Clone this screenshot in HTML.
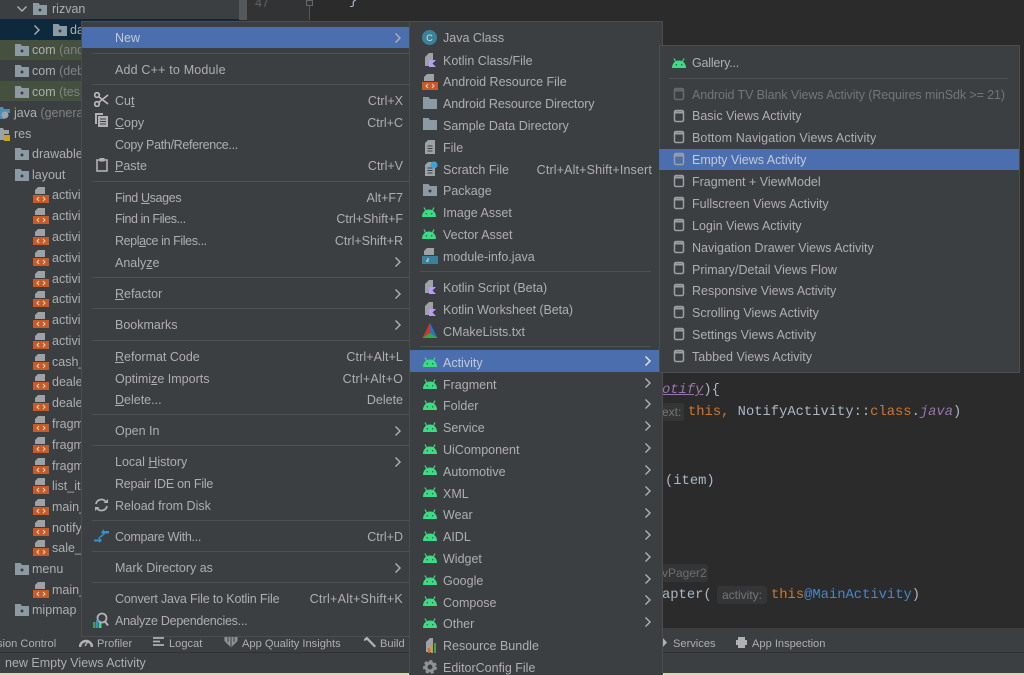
<!DOCTYPE html>
<html><head><meta charset="utf-8"><title>New Empty Views Activity</title>
<style>
html,body{margin:0;padding:0;background:#2b2b2b}
#p{position:relative;width:1024px;height:675px;overflow:hidden;background:#2b2b2b;font-family:"Liberation Sans",sans-serif;font-size:12.5px;color:#adafb1;filter:blur(.3px)}
#p div,#p svg{position:absolute}
.t{height:16px;line-height:16px;white-space:nowrap}
.s{height:16px;line-height:16px;white-space:nowrap;text-align:right}
.b{height:16px;line-height:16px;white-space:nowrap;font-size:11.1px}
.l{height:1px;background:#4f5254}
.m{background:#3c3f41;border:1px solid #4b4e50;box-sizing:border-box}
.h{background:#4b6eaf}
.c{font-family:"Liberation Mono",monospace;font-size:13.8px;color:#a9b7c6;height:18px;line-height:18px;white-space:pre}
.g{color:#777;font-size:12px;font-family:"Liberation Sans",sans-serif;background:#333536;border-radius:3px;height:18px;line-height:18px;padding:0 3px}
u{text-underline-offset:1px}
.o{color:#cc7832}
.d{color:#808284}
</style></head><body><div id="p">
<svg width="0" height="0" style="left:0;top:0"><defs>
<symbol id="a" viewBox="0 0 14 12"><path d="M0 12C0 7.500 3 4.500 7 4.500S14 7.500 14 12Z" fill="#3ddc84"/><path d="M3.500 5.500 2 2.500M10.500 5.500 12 2.500" stroke="#3ddc84" stroke-width="1.200"/><circle cx="4.300" cy="8.800" r=".7" fill="#3c3f41"/><circle cx="9.700" cy="8.800" r=".7" fill="#3c3f41"/></symbol>
<symbol id="f" viewBox="0 0 16 14"><path d="M1 1H6.500L8 3H15V13H1Z" fill="#8c9aa3"/><circle cx="8" cy="8" r="1.500" fill="#3c3f41"/></symbol>
<symbol id="e" viewBox="0 0 16 14"><path d="M1 1H6.500L8 3H15V13H1Z" fill="#8c9aa3"/></symbol>
<symbol id="x" viewBox="0 0 16 16"><path d="M5 0H12V7H2V3Z" fill="#9da2a6"/><path d="M0 8H16V16H0Z" fill="#c75a26"/><path d="M6 10 4 12 6 14M10 10 12 12 10 14" stroke="#e8d8c8" stroke-width="1" fill="none"/></symbol>
<symbol id="k" viewBox="0 0 14 16"><path d="M2 5 6 1H10V8H7V14H2Z" fill="#9da2a6"/><path d="M6 8H13L9.500 11.500 13 15H6Z" fill="#b99bf8"/></symbol>
<symbol id="w" viewBox="0 0 12 14"><rect x="1.500" y="1.500" width="9" height="11" rx="1.500" fill="none" stroke="#9aa0a5" stroke-width="1.500"/><path d="M1.500 3.500H10.500" stroke="#9aa0a5" stroke-width="2"/></symbol>
<symbol id="r" viewBox="0 0 8 12"><path d="M1.500 1.500 6 6 1.500 10.500" fill="none" stroke="#afb1b3" stroke-width="1.400"/></symbol>
<symbol id="d" viewBox="0 0 12 16"><path d="M4 1H11V15H1V4Z" fill="#9da2a6"/><path d="M3.500 7H8.500M3.500 9.500H8.500M3.500 12H8.500" stroke="#3c3f41"/></symbol>
</defs></svg>

<!-- project tree -->
<div style="left:0;top:0;width:240px;height:629px;background:#3c3f41"></div>
<div style="left:0;top:19px;width:240px;height:21px;background:#0d293e"></div>
<div style="left:0;top:40px;width:240px;height:20px;background:#45503f"></div>
<div style="left:0;top:81px;width:240px;height:20px;background:#45503f"></div>
<div style="left:239px;top:0;width:8px;height:20px;background:#55585a"></div>
<div style="left:247px;top:0;width:62px;height:21px;background:#313335"></div>
<svg style="left:16px;top:5px" width="12" height="8"><path d="M1.500 1.500 6 6 10.500 1.500" fill="none" stroke="#afb1b3" stroke-width="1.400"/></svg>
<svg style="left:33px;top:24px" width="8" height="12"><use href="#r"/></svg>
<svg style="left:32px;top:2px" width="16" height="14"><use href="#f"/></svg>
<svg style="left:52px;top:23px" width="16" height="14"><use href="#f"/></svg>
<div class="t" style="left:52px;top:1px">rizvan</div>
<div class="t" style="left:70px;top:22px">da</div>
<svg style="left:14px;top:43px" width="16" height="14"><use href="#f"/></svg>
<svg style="left:14px;top:64px" width="16" height="14"><use href="#f"/></svg>
<svg style="left:14px;top:85px" width="16" height="14"><use href="#f"/></svg>
<div class="t" style="left:32px;top:42px">com <span class="d">(and</span></div>
<div class="t" style="left:32px;top:63px">com <span class="d">(deb</span></div>
<div class="t" style="left:32px;top:84px">com <span class="d">(tes</span></div>
<svg style="left:-2px;top:106px" width="14" height="14"><path d="M0 1H5L6 3H12V7H7V13H0Z" fill="#4b8fb5"/><circle cx="7" cy="9" r="3.500" fill="#a0a4a8"/></svg>
<div class="t" style="left:14px;top:105px">java <span class="d">(genera</span></div>
<svg style="left:-1px;top:127px" width="13" height="15"><path d="M0 1H4L5 3H10V7H5V13H0Z" fill="#9ca3a8"/><path d="M5 8H11V14H5Z" fill="#c9a02f"/></svg>
<div class="t" style="left:14px;top:126px">res</div>
<svg style="left:14px;top:147px" width="16" height="14"><use href="#f"/></svg>
<div class="t" style="left:32px;top:146px">drawable</div>
<svg style="left:14px;top:168px" width="16" height="14"><use href="#f"/></svg>
<div class="t" style="left:32px;top:167px">layout</div>
<svg style="left:33px;top:187px" width="16" height="16"><use href="#x"/></svg><div class="t" style="left:52px;top:187px">activi</div>
<svg style="left:33px;top:208px" width="16" height="16"><use href="#x"/></svg><div class="t" style="left:52px;top:208px">activi</div>
<svg style="left:33px;top:229px" width="16" height="16"><use href="#x"/></svg><div class="t" style="left:52px;top:229px">activi</div>
<svg style="left:33px;top:250px" width="16" height="16"><use href="#x"/></svg><div class="t" style="left:52px;top:250px">activi</div>
<svg style="left:33px;top:271px" width="16" height="16"><use href="#x"/></svg><div class="t" style="left:52px;top:271px">activi</div>
<svg style="left:33px;top:291px" width="16" height="16"><use href="#x"/></svg><div class="t" style="left:52px;top:291px">activi</div>
<svg style="left:33px;top:312px" width="16" height="16"><use href="#x"/></svg><div class="t" style="left:52px;top:312px">activi</div>
<svg style="left:33px;top:333px" width="16" height="16"><use href="#x"/></svg><div class="t" style="left:52px;top:333px">activi</div>
<svg style="left:33px;top:354px" width="16" height="16"><use href="#x"/></svg><div class="t" style="left:52px;top:354px">cash_</div>
<svg style="left:33px;top:374px" width="16" height="16"><use href="#x"/></svg><div class="t" style="left:52px;top:374px">deale</div>
<svg style="left:33px;top:395px" width="16" height="16"><use href="#x"/></svg><div class="t" style="left:52px;top:395px">deale</div>
<svg style="left:33px;top:416px" width="16" height="16"><use href="#x"/></svg><div class="t" style="left:52px;top:416px">fragm</div>
<svg style="left:33px;top:437px" width="16" height="16"><use href="#x"/></svg><div class="t" style="left:52px;top:437px">fragm</div>
<svg style="left:33px;top:458px" width="16" height="16"><use href="#x"/></svg><div class="t" style="left:52px;top:458px">fragm</div>
<svg style="left:33px;top:478px" width="16" height="16"><use href="#x"/></svg><div class="t" style="left:52px;top:478px">list_it</div>
<svg style="left:33px;top:499px" width="16" height="16"><use href="#x"/></svg><div class="t" style="left:52px;top:499px">main_</div>
<svg style="left:33px;top:520px" width="16" height="16"><use href="#x"/></svg><div class="t" style="left:52px;top:520px">notify</div>
<svg style="left:33px;top:540px" width="16" height="16"><use href="#x"/></svg><div class="t" style="left:52px;top:540px">sale_c</div>
<svg style="left:14px;top:562px" width="16" height="14"><use href="#f"/></svg><div class="t" style="left:32px;top:561px">menu</div>
<svg style="left:33px;top:582px" width="16" height="16"><use href="#x"/></svg><div class="t" style="left:52px;top:582px">main_</div>
<svg style="left:14px;top:603px" width="16" height="14"><use href="#f"/></svg><div class="t" style="left:32px;top:602px">mipmap</div>

<!-- editor code -->
<div style="left:309px;top:0;width:1px;height:20px;background:#555"></div>
<div style="left:306px;top:0;width:7px;height:6px;border:1px solid #666;box-sizing:border-box;background:#313335"></div>
<div class="t" style="left:255px;top:-5px;color:#606366">47</div>
<div class="c" style="left:349px;top:-7px">}</div>
<div class="c" style="left:662px;top:382px"><span style="color:#9876aa;font-style:italic;text-decoration:underline">otify</span>){</div>
<div class="g" style="left:662px;top:403px;padding-left:0">ext:</div>
<div class="c" style="left:688px;top:404px"><span class="o">this,</span> NotifyActivity::<span class="o">class</span>.<span style="color:#9876aa;font-style:italic">java</span>)</div>
<div class="c" style="left:665px;top:473px">(item)</div>
<div class="g" style="left:662px;top:564px;width:46px;padding:0;color:#6e6e6e">vPager2</div>
<div class="c" style="left:662px;top:587px">apter(</div>
<div class="g" style="left:717px;top:586px;padding:0 5px">activity:</div>
<div class="c" style="left:771px;top:587px"><span class="o">this</span><span style="color:#4a86c7">@MainActivity</span>)</div>

<!-- bottom bars -->
<div style="left:0;top:628px;width:1024px;height:25px;background:#3c3f41"></div>
<div style="left:0;top:652px;width:1024px;height:1px;background:#323232"></div>
<div style="left:0;top:653px;width:1024px;height:20px;background:#3c3f41"></div>
<div style="left:0;top:673px;width:1024px;height:2px;background:#d5dea6"></div>
<div class="b" style="left:-3px;top:636px">sion Control</div>
<svg style="left:79px;top:637px" width="14" height="11"><path d="M1 10A6 6 0 0 1 13 10" fill="none" stroke="#afb1b3" stroke-width="2.500"/><path d="M6 9 9 4" stroke="#afb1b3" stroke-width="1.500"/></svg>
<div class="b" style="left:97px;top:636px">Profiler</div>
<svg style="left:153px;top:637px" width="12" height="10"><path d="M0 1H11M0 4.500H7M0 8H11" stroke="#afb1b3" stroke-width="1.700"/></svg>
<div class="b" style="left:169px;top:636px">Logcat</div>
<svg style="left:224px;top:636px" width="14" height="12"><path d="M0.500 1H13.500V5L7 11.500.5 5Z" fill="#8f9395"/><path d="M4 1V6M7 1V11M10 1V6" stroke="#3c3f41"/></svg>
<div class="b" style="left:242px;top:636px">App Quality Insights</div>
<svg style="left:363px;top:636px" width="14" height="12"><path d="M1 3 4 0.500 13 10 11.500 11.500 4 4 1 5Z" fill="#afb1b3"/></svg>
<div class="b" style="left:380px;top:636px">Build</div>
<svg style="left:662px;top:637px" width="6" height="11"><path d="M0 0 5 5.500 0 11Z" fill="#afb1b3"/></svg>
<div class="b" style="left:673px;top:636px">Services</div>
<svg style="left:735px;top:636px" width="13" height="13"><path d="M3 1H10V4H12V9H10V12H3V9H1V4H3Z" fill="#afb1b3"/></svg>
<div class="b" style="left:752px;top:636px">App Inspection</div>
<div class="t" style="left:0;top:655px;width:200px;overflow:hidden"><span style="padding-left:5px">new Empty Views Activity</span></div>

<!-- menu 1 -->
<div class="m" style="left:81px;top:21px;width:329px;height:616px"></div>
<div class="h" style="left:82px;top:27px;width:328px;height:21px"></div>
<div class="t" style="left:115px;top:30px;color:#c4cad6">New</div>
<svg style="left:394px;top:32px" width="8" height="12"><use href="#r"/></svg>
<div class="l" style="left:92px;top:53px;width:317px"></div>
<div class="t" style="left:115px;top:62px;letter-spacing:.18px">Add C++ to Module</div>
<div class="l" style="left:92px;top:84px;width:317px"></div>
<svg style="left:94px;top:92px" width="15" height="15"><circle cx="3" cy="3" r="2.300" fill="none" stroke="#b8babc" stroke-width="1.700"/><circle cx="3" cy="12" r="2.300" fill="none" stroke="#b8babc" stroke-width="1.700"/><path d="M4.500 4.500 14 12M4.500 10.500 14 3" stroke="#b8babc" stroke-width="1.700"/></svg>
<div class="t" style="left:115px;top:93px">Cu<u>t</u></div>
<div class="s" style="left:250px;top:93px;width:153px">Ctrl+X</div>
<svg style="left:95px;top:113px" width="14" height="15"><path d="M0 0H8V2H2V11H0Z" fill="#afb1b3"/><path d="M3 3H13V14H3Z" fill="#afb1b3"/><path d="M5 6H11M5 8.500H11M5 11H11" stroke="#3c3f41"/></svg>
<div class="t" style="left:115px;top:115px"><u>C</u>opy</div>
<div class="s" style="left:250px;top:115px;width:153px">Ctrl+C</div>
<div class="t" style="left:115px;top:137px;letter-spacing:-.32px">Copy Path/Reference...</div>
<svg style="left:96px;top:158px" width="12" height="14"><rect x="1" y="2" width="10" height="11" fill="none" stroke="#afb1b3" stroke-width="1.600"/><rect x="3.500" y="0" width="5" height="3.500" fill="#afb1b3"/></svg>
<div class="t" style="left:115px;top:158px"><u>P</u>aste</div>
<div class="s" style="left:250px;top:158px;width:153px">Ctrl+V</div>
<div class="l" style="left:92px;top:181px;width:317px"></div>
<div class="t" style="left:115px;top:190px;letter-spacing:-.36px">Find <u>U</u>sages</div>
<div class="s" style="left:250px;top:190px;width:153px">Alt+F7</div>
<div class="t" style="left:115px;top:211px;letter-spacing:-.45px">Find in Files...</div>
<div class="s" style="left:250px;top:211px;width:153px">Ctrl+Shift+F</div>
<div class="t" style="left:115px;top:233px;letter-spacing:-.4px">Repl<u>a</u>ce in Files...</div>
<div class="s" style="left:250px;top:233px;width:153px">Ctrl+Shift+R</div>
<div class="t" style="left:115px;top:255px">Analy<u>z</u>e</div>
<svg style="left:394px;top:256px" width="8" height="12"><use href="#r"/></svg>
<div class="l" style="left:92px;top:277px;width:317px"></div>
<div class="t" style="left:115px;top:286px"><u>R</u>efactor</div>
<svg style="left:394px;top:288px" width="8" height="12"><use href="#r"/></svg>
<div class="l" style="left:92px;top:308px;width:317px"></div>
<div class="t" style="left:115px;top:317px">Bookmarks</div>
<svg style="left:394px;top:319px" width="8" height="12"><use href="#r"/></svg>
<div class="l" style="left:92px;top:340px;width:317px"></div>
<div class="t" style="left:115px;top:349px"><u>R</u>eformat Code</div>
<div class="s" style="left:250px;top:349px;width:153px;letter-spacing:.1px">Ctrl+Alt+L</div>
<div class="t" style="left:115px;top:371px">Optimi<u>z</u>e Imports</div>
<div class="s" style="left:250px;top:371px;width:153px;letter-spacing:.2px">Ctrl+Alt+O</div>
<div class="t" style="left:115px;top:392px"><u>D</u>elete...</div>
<div class="s" style="left:250px;top:392px;width:153px">Delete</div>
<div class="l" style="left:92px;top:414px;width:317px"></div>
<div class="t" style="left:115px;top:423px">Open In</div>
<svg style="left:394px;top:425px" width="8" height="12"><use href="#r"/></svg>
<div class="l" style="left:92px;top:445px;width:317px"></div>
<div class="t" style="left:115px;top:454px">Local <u>H</u>istory</div>
<svg style="left:394px;top:456px" width="8" height="12"><use href="#r"/></svg>
<div class="t" style="left:115px;top:476px;letter-spacing:-.22px">Repair IDE on File</div>
<svg style="left:94px;top:498px" width="15" height="14"><path d="M2 6A5.500 5.500 0 0 1 12 4M13 8A5.500 5.500 0 0 1 3 10" fill="none" stroke="#afb1b3" stroke-width="1.800"/><path d="M9.500 5H14V1ZM5.500 9H1V13Z" fill="#afb1b3"/></svg>
<div class="t" style="left:115px;top:498px">Reload from Disk</div>
<div class="l" style="left:92px;top:520px;width:317px"></div>
<svg style="left:94px;top:529px" width="15" height="14"><path d="M0 10.500H5V8L8 11.500 5 14V12.500H0Z" fill="#3592c4"/><path d="M15 2H10V0L7 3.500 10 6V4.500H15Z" fill="#3592c4"/><path d="M8 6 4.500 9.500M7 8 10.500 4.500" stroke="#3592c4" stroke-width="1.200"/></svg>
<div class="t" style="left:115px;top:529px;letter-spacing:-.28px">Compare With...</div>
<div class="s" style="left:250px;top:529px;width:153px">Ctrl+D</div>
<div class="l" style="left:92px;top:551px;width:317px"></div>
<div class="t" style="left:115px;top:560px">Mark Directory as</div>
<svg style="left:394px;top:562px" width="8" height="12"><use href="#r"/></svg>
<div class="l" style="left:92px;top:582px;width:317px"></div>
<div class="t" style="left:115px;top:591px;letter-spacing:-.16px">Convert Java File to Kotlin File</div>
<div class="s" style="left:250px;top:591px;width:153px;letter-spacing:.26px">Ctrl+Alt+Shift+K</div>
<svg style="left:93px;top:612px" width="16" height="16"><circle cx="9" cy="6" r="4.500" fill="none" stroke="#afb1b3" stroke-width="1.800"/><path d="M12 9.500 15 13.500" stroke="#afb1b3" stroke-width="2"/><rect x="0" y="10" width="2.500" height="6" fill="#499c54"/><rect x="3" y="8" width="2.500" height="8" fill="#3592c4"/><rect x="6" y="11" width="2.500" height="5" fill="#3ddc84"/></svg>
<div class="t" style="left:115px;top:613px;letter-spacing:-.26px">Analyze Dependencies...</div>

<!-- menu 2 -->
<div class="m" style="left:409px;top:21px;width:254px;height:660px"></div>
<svg style="left:422px;top:30px" width="15" height="15"><circle cx="7.500" cy="7.500" r="7.500" fill="#3a8299"/><text x="7.500" y="11" font-family="Liberation Sans" font-size="9" text-anchor="middle" fill="#cfe0e6">C</text></svg>
<div class="t" style="left:443px;top:30px">Java Class</div>
<svg style="left:423px;top:52px" width="14" height="16"><use href="#k"/></svg>
<div class="t" style="left:443px;top:53px">Kotlin Class/File</div>
<svg style="left:422px;top:74px" width="16" height="16"><use href="#x"/></svg>
<div class="t" style="left:443px;top:74px">Android Resource File</div>
<svg style="left:422px;top:96px" width="16" height="14"><use href="#e"/></svg>
<div class="t" style="left:443px;top:96px;letter-spacing:-.08px">Android Resource Directory</div>
<svg style="left:422px;top:117px" width="16" height="14"><use href="#e"/></svg>
<div class="t" style="left:443px;top:118px">Sample Data Directory</div>
<svg style="left:424px;top:139px" width="12" height="16"><use href="#d"/></svg>
<div class="t" style="left:443px;top:140px">File</div>
<svg style="left:424px;top:161px" width="14" height="16"><use href="#d" width="12" height="16"/><circle cx="10" cy="4" r="3.500" fill="#3ba4dd"/></svg>
<div class="t" style="left:443px;top:162px">Scratch File</div>
<div class="s" style="left:500px;top:162px;width:152px;letter-spacing:.15px">Ctrl+Alt+Shift+Insert</div>
<svg style="left:422px;top:183px" width="16" height="14"><use href="#f"/></svg>
<div class="t" style="left:443px;top:183px">Package</div>
<svg style="left:422px;top:205px" width="14" height="12"><use href="#a"/></svg>
<div class="t" style="left:443px;top:205px">Image Asset</div>
<svg style="left:422px;top:227px" width="14" height="12"><use href="#a"/></svg>
<div class="t" style="left:443px;top:227px">Vector Asset</div>
<svg style="left:422px;top:248px" width="16" height="16"><path d="M5 0H12V7H2V3Z" fill="#9da2a6"/><path d="M0 8H16V16H0Z" fill="#3a8299"/><path d="M6 10V13H4" stroke="#dde" fill="none"/></svg>
<div class="t" style="left:443px;top:249px">module-info.java</div>
<div class="l" style="left:420px;top:271px;width:231px"></div>
<svg style="left:423px;top:279px" width="14" height="16"><use href="#k"/></svg>
<div class="t" style="left:443px;top:280px">Kotlin Script (Beta)</div>
<svg style="left:423px;top:301px" width="14" height="16"><use href="#k"/></svg>
<div class="t" style="left:443px;top:302px;letter-spacing:-.08px">Kotlin Worksheet (Beta)</div>
<svg style="left:422px;top:323px" width="16" height="15"><path d="M8 0 15.500 15H.5Z" fill="#2f6fc0"/><path d="M8 0 8 10 .5 15Z" fill="#d0342c"/><path d="M8 10 15.500 15H.5Z" fill="#2fae3a"/></svg>
<div class="t" style="left:443px;top:324px">CMakeLists.txt</div>
<div class="l" style="left:420px;top:346px;width:231px"></div>
<div class="h" style="left:410px;top:350px;width:249px;height:22px"></div>
<svg style="left:423px;top:355px" width="14" height="12"><use href="#a"/></svg>
<div class="t" style="left:443px;top:355px;color:#c4cad6">Activity</div>
<svg style="left:644px;top:355px" width="8" height="12"><path d="M1.500 1.500 6 6 1.500 10.500" fill="none" stroke="#e6e6e6" stroke-width="1.400"/></svg>
<svg style="left:423px;top:377px" width="14" height="12"><use href="#a"/></svg>
<div class="t" style="left:443px;top:377px">Fragment</div><svg style="left:644px;top:377px" width="8" height="12"><use href="#r"/></svg>
<svg style="left:423px;top:398px" width="14" height="12"><use href="#a"/></svg>
<div class="t" style="left:443px;top:398px">Folder</div><svg style="left:644px;top:398px" width="8" height="12"><use href="#r"/></svg>
<svg style="left:423px;top:420px" width="14" height="12"><use href="#a"/></svg>
<div class="t" style="left:443px;top:420px">Service</div><svg style="left:644px;top:420px" width="8" height="12"><use href="#r"/></svg>
<svg style="left:423px;top:442px" width="14" height="12"><use href="#a"/></svg>
<div class="t" style="left:443px;top:442px">UiComponent</div><svg style="left:644px;top:442px" width="8" height="12"><use href="#r"/></svg>
<svg style="left:423px;top:463px" width="14" height="12"><use href="#a"/></svg>
<div class="t" style="left:443px;top:464px">Automotive</div><svg style="left:644px;top:464px" width="8" height="12"><use href="#r"/></svg>
<svg style="left:423px;top:485px" width="14" height="12"><use href="#a"/></svg>
<div class="t" style="left:443px;top:486px">XML</div><svg style="left:644px;top:485px" width="8" height="12"><use href="#r"/></svg>
<svg style="left:423px;top:507px" width="14" height="12"><use href="#a"/></svg>
<div class="t" style="left:443px;top:507px">Wear</div><svg style="left:644px;top:507px" width="8" height="12"><use href="#r"/></svg>
<svg style="left:423px;top:529px" width="14" height="12"><use href="#a"/></svg>
<div class="t" style="left:443px;top:529px">AIDL</div><svg style="left:644px;top:529px" width="8" height="12"><use href="#r"/></svg>
<svg style="left:423px;top:551px" width="14" height="12"><use href="#a"/></svg>
<div class="t" style="left:443px;top:551px">Widget</div><svg style="left:644px;top:551px" width="8" height="12"><use href="#r"/></svg>
<svg style="left:423px;top:573px" width="14" height="12"><use href="#a"/></svg>
<div class="t" style="left:443px;top:573px">Google</div><svg style="left:644px;top:573px" width="8" height="12"><use href="#r"/></svg>
<svg style="left:423px;top:594px" width="14" height="12"><use href="#a"/></svg>
<div class="t" style="left:443px;top:595px">Compose</div><svg style="left:644px;top:594px" width="8" height="12"><use href="#r"/></svg>
<svg style="left:423px;top:616px" width="14" height="12"><use href="#a"/></svg>
<div class="t" style="left:443px;top:616px">Other</div><svg style="left:644px;top:616px" width="8" height="12"><use href="#r"/></svg>
<svg style="left:423px;top:637px" width="15" height="16"><path d="M3 5 7 1H10V15H3Z" fill="#9da2a6"/><rect x="5" y="11" width="2" height="5" fill="#d5682a"/><rect x="8" y="8" width="2" height="8" fill="#c9a02f"/><rect x="11" y="6" width="2" height="10" fill="#499c54"/></svg>
<div class="t" style="left:443px;top:638px">Resource Bundle</div>
<svg style="left:423px;top:660px" width="14" height="14"><circle cx="7" cy="7" r="4" fill="none" stroke="#8f9395" stroke-width="3"/><circle cx="7" cy="7" r="6" fill="none" stroke="#8f9395" stroke-width="2" stroke-dasharray="3 2.500"/></svg>
<div class="t" style="left:443px;top:660px">EditorConfig File</div>

<!-- menu 3 -->
<div class="m" style="left:659px;top:45px;width:361px;height:328px"></div>
<svg style="left:672px;top:56px" width="14" height="12"><use href="#a"/></svg>
<div class="t" style="left:692px;top:55px;letter-spacing:-.2px">Gallery...</div>
<div class="l" style="left:669px;top:78px;width:339px"></div>
<svg style="left:673px;top:87px;opacity:.45" width="12" height="14"><use href="#w"/></svg>
<div class="t" style="left:692px;top:87px;color:#737678;letter-spacing:-.1px">Android TV Blank Views Activity (Requires minSdk &gt;= 21)</div>
<svg style="left:673px;top:109px" width="12" height="14"><use href="#w"/></svg>
<div class="t" style="left:692px;top:108px">Basic Views Activity</div>
<svg style="left:673px;top:130px" width="12" height="14"><use href="#w"/></svg>
<div class="t" style="left:692px;top:130px;letter-spacing:.1px">Bottom Navigation Views Activity</div>
<div class="h" style="left:659px;top:149px;width:360px;height:21px"></div>
<svg style="left:673px;top:152px" width="12" height="14"><use href="#w"/></svg>
<div class="t" style="left:692px;top:152px;color:#c4cad6">Empty Views Activity</div>
<svg style="left:673px;top:174px" width="12" height="14"><use href="#w"/></svg>
<div class="t" style="left:692px;top:174px">Fragment + ViewModel</div>
<svg style="left:673px;top:196px" width="12" height="14"><use href="#w"/></svg>
<div class="t" style="left:692px;top:196px">Fullscreen Views Activity</div>
<svg style="left:673px;top:218px" width="12" height="14"><use href="#w"/></svg>
<div class="t" style="left:692px;top:218px">Login Views Activity</div>
<svg style="left:673px;top:240px" width="12" height="14"><use href="#w"/></svg>
<div class="t" style="left:692px;top:240px">Navigation Drawer Views Activity</div>
<svg style="left:673px;top:261px" width="12" height="14"><use href="#w"/></svg>
<div class="t" style="left:692px;top:262px">Primary/Detail Views Flow</div>
<svg style="left:673px;top:283px" width="12" height="14"><use href="#w"/></svg>
<div class="t" style="left:692px;top:283px">Responsive Views Activity</div>
<svg style="left:673px;top:305px" width="12" height="14"><use href="#w"/></svg>
<div class="t" style="left:692px;top:305px">Scrolling Views Activity</div>
<svg style="left:673px;top:327px" width="12" height="14"><use href="#w"/></svg>
<div class="t" style="left:692px;top:327px">Settings Views Activity</div>
<svg style="left:673px;top:349px" width="12" height="14"><use href="#w"/></svg>
<div class="t" style="left:692px;top:349px">Tabbed Views Activity</div>
</div></body></html>
